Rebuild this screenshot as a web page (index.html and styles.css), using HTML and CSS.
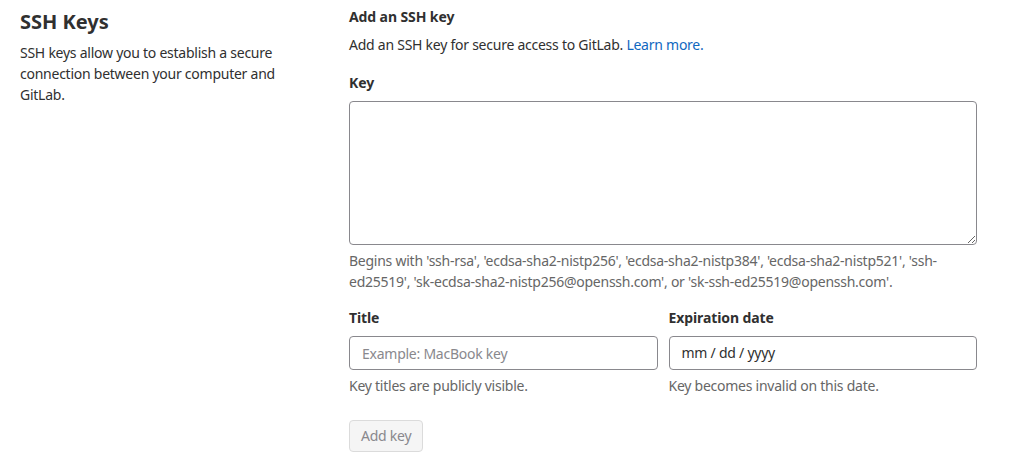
FILE: index.html
```html
<!DOCTYPE html>
<html lang="en">
<head>
<meta charset="utf-8">
<title>SSH Keys</title>
<link rel="stylesheet" href="styles.css">
</head>
<body>
<div class="settings">
  <section class="intro">
    <h2 class="intro-title">SSH Keys</h2>
    <p class="intro-text">SSH keys allow you to establish a secure connection between your computer and GitLab.</p>
  </section>
  <section class="panel">
    <h5 class="panel-title">Add an SSH key</h5>
    <p class="panel-lead">Add an SSH key for secure access to GitLab. <a class="link" href="#">Learn more.</a></p>
    <div class="field">
      <label class="label" for="key">Key</label>
      <textarea class="textarea" id="key"></textarea>
      <p class="help">Begins with 'ssh-rsa', 'ecdsa-sha2-nistp256', 'ecdsa-sha2-nistp384', 'ecdsa-sha2-nistp521', 'ssh-ed25519', 'sk-ecdsa-sha2-nistp256@openssh.com', or 'sk-ssh-ed25519@openssh.com'.</p>
    </div>
    <div class="field-row">
      <div class="field">
        <label class="label" for="title">Title</label>
        <input class="input" id="title" type="text" placeholder="Example: MacBook key">
        <p class="help">Key titles are publicly visible.</p>
      </div>
      <div class="field">
        <label class="label" for="exp">Expiration date</label>
        <div class="input date">mm / dd / yyyy</div>
        <p class="help">Key becomes invalid on this date.</p>
      </div>
    </div>
    <button class="btn" disabled>Add key</button>
  </section>
</div>
</body>
</html>
```
FILE: styles.css
```css
* { box-sizing: border-box; }
body {
  margin: 0;
  font-family: "Noto Sans", "Open Sans", sans-serif;
  font-size: 14px;
  line-height: 20px;
  color: #303030;
  background: #fff;
  letter-spacing: -0.25px;
}
.settings {
  display: grid;
  grid-template-columns: 299px 628px;
  column-gap: 30px;
  padding: 0 20px;
}
.intro-title {
  margin: 10px 0 0;
  font-size: 20px;
  line-height: 24px;
  font-weight: 700;
  letter-spacing: 0;
}
.intro-text {
  margin: 8px 0 0;
  line-height: 21px;
}
.panel-title {
  margin: 7px 0 0;
  font-size: 14px;
  font-weight: 700;
  line-height: 20px;
  letter-spacing: -0.1px;
}
.panel-lead { margin: 8px 0 0; }
.link { color: #1068bf; text-decoration: none; }
.field { margin-top: 18px; display: flex; flex-direction: column; }
.label { font-weight: 700; margin-bottom: 8px; letter-spacing: -0.1px; }
.textarea {
  height: 144px;
  border: 1px solid #89888d;
  border-radius: 4px;
  font: inherit;
  resize: vertical;
}
.help {
  margin: 5px 0 0;
  color: #666;
  line-height: 21px;
}
.field-row {
  display: grid;
  grid-template-columns: 1fr 1fr;
  column-gap: 11px;
}
.field-row .field { margin-top: 16px; }
.input {
  height: 34px;
  border: 1px solid #89888d;
  border-radius: 4px;
  padding: 0 12px;
  font: inherit;
  letter-spacing: -0.25px;
  color: #303030;
  display: flex;
  align-items: center;
}
.input::placeholder { color: #89888d; }
.btn {
  margin-top: 24px;
  height: 32px;
  padding: 0 11px;
  border: 1px solid #dbdbdb;
  border-radius: 4px;
  background: #f5f5f5;
  color: #89888d;
  font: inherit;
  letter-spacing: -0.25px;
}
```
